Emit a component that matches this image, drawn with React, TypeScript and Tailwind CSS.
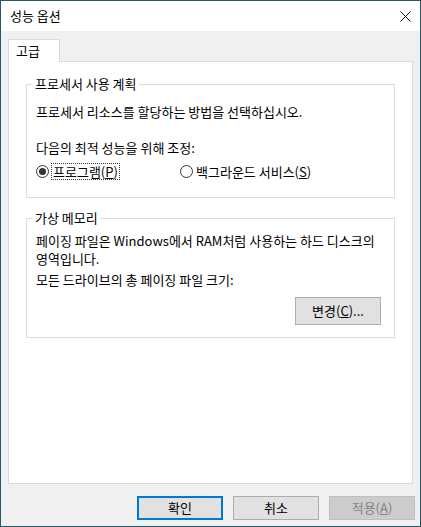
import React from "react";

const font = { fontFamily: '"Noto Sans CJK KR", "Noto Sans", sans-serif' };

function Radio({ checked }: { checked: boolean }) {
  return (
    <span className="relative inline-flex h-[13px] w-[13px] shrink-0 items-center justify-center rounded-full border border-[#333] bg-white">
      {checked && <span className="h-[7px] w-[7px] rounded-full bg-[#333]" />}
    </span>
  );
}

function Group({ title, children, className }: { title: string; children: React.ReactNode; className?: string }) {
  return (
    <fieldset className={`border border-[#dcdcdc] px-[9px] ${className ?? ""}`}>
      <legend className="ml-[-3px] px-[2px] leading-[16px]">{title}</legend>
      {children}
    </fieldset>
  );
}

export default function App() {
  return (
    <div style={font} className="w-[421px] h-[527px] bg-[#2a5567] p-[1px] text-[13px] text-black">
      <div className="flex h-full flex-col bg-[#f0f0f0]">
        <div className="flex h-[30px] shrink-0 items-center justify-between bg-white pl-[9px] pr-[9px]">
          <span className="text-[13px]">성능 옵션</span>
          <svg width="11" height="11" viewBox="0 0 11 11">
            <path d="M0.5 0.5 L10.5 10.5 M10.5 0.5 L0.5 10.5" stroke="#111" strokeWidth="1" />
          </svg>
        </div>
        <div className="flex flex-1 flex-col px-[7px] pt-[8px]">
          <div className="flex">
            <div className="relative z-10 -mb-px flex h-[23px] w-[52px] items-center border border-b-0 border-[#d9d9d9] bg-white pl-[7px]">
              고급
            </div>
          </div>
          <div className="flex h-[423px] flex-col border border-[#d9d9d9] bg-white px-[17px] pt-[14px]">
            <Group title="프로세서 사용 계획" className="h-[122px]">
              <div className="mt-[12px] leading-[16px]">프로세서 리소스를 할당하는 방법을 선택하십시오.</div>
              <div className="mt-[20px] leading-[16px]">다음의 최적 성능을 위해 조정:</div>
              <div className="mt-[7px] flex items-center leading-[16px]">
                <span className="flex w-[144px] items-center">
                  <Radio checked />
                  <span className="ml-[2px] border border-dotted border-[#333] px-[1px] leading-[15px]">
                    프로그램(<span className="underline">P</span>)
                  </span>
                </span>
                <span className="flex items-center">
                  <Radio checked={false} />
                  <span className="ml-[3px]">
                    백그라운드 서비스(<span className="underline">S</span>)
                  </span>
                </span>
              </div>
            </Group>
            <Group title="가상 메모리" className="mt-[12px] h-[128px]">
              <div className="mt-[6px] leading-[18px]">
                페이징 파일은 Windows에서 RAM처럼 사용하는 하드 디스크의
                <br />
                영역입니다.
              </div>
              <div className="mt-[3px] leading-[18px]">모든 드라이브의 총 페이징 파일 크기:</div>
              <div className="mt-[8px] flex justify-end pr-[4px]">
                <button className="flex h-[28px] w-[86px] items-center justify-center border border-[#adadad] bg-[#e1e1e1]">
                  변경(<span className="underline">C</span>)...
                </button>
              </div>
            </Group>
          </div>
          <div className="-mr-[2px] mt-[12px] flex justify-end gap-[10px]">
            <button className="flex h-[24px] w-[86px] items-center justify-center border-2 border-[#0078d7] bg-[#e1e1e1]">
              확인
            </button>
            <button className="flex h-[24px] w-[86px] items-center justify-center border border-[#adadad] bg-[#e1e1e1]">
              취소
            </button>
            <button className="flex h-[24px] w-[86px] items-center justify-center border border-[#bfbfbf] bg-[#cccccc] text-[#838383]">
              적용(<span className="underline">A</span>)
            </button>
          </div>
        </div>
      </div>
    </div>
  );
}
